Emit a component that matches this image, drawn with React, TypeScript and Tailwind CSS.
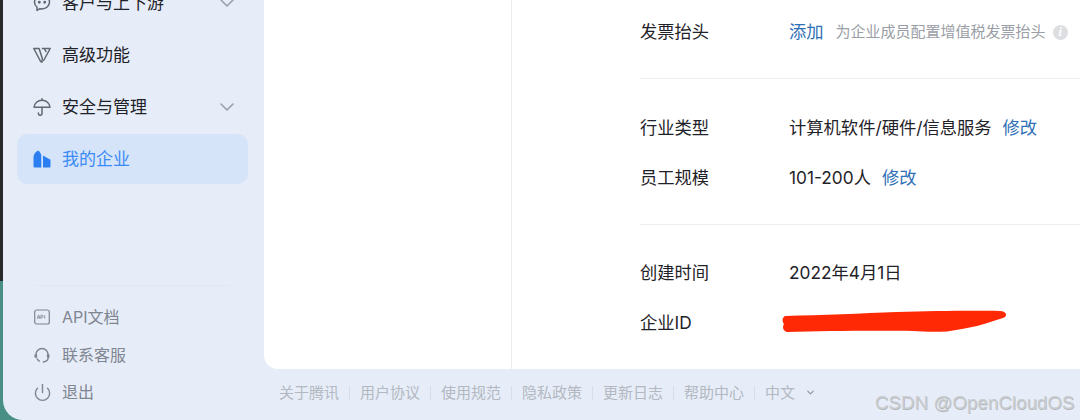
import React from "react";
import { ChevronDown, Power } from "lucide-react";

const font = 'font-["Inter","Noto_Sans_CJK_SC",sans-serif]';

function Chevron() {
  return (
    <svg width="16" height="10" viewBox="0 0 16 10" fill="none" stroke="#9aa0ab" strokeWidth="1.6" strokeLinecap="round" strokeLinejoin="round">
      <path d="M2 2l6 6 6-6" />
    </svg>
  );
}

function NavRow({ icon, label, chevron, active }: { icon: React.ReactNode; label: string; chevron?: boolean; active?: boolean }) {
  return (
    <div className={`h-[50px] shrink-0 rounded-[10px] flex items-center pl-[16px] pr-[13px] ${active ? "bg-[#d5e4f9] text-[#3b8bf5]" : "text-[#1f2329]"}`}>
      <span className="w-[18px] h-[18px] flex items-center justify-center shrink-0">{icon}</span>
      <span className="ml-[11px] text-[17px] leading-[24px] flex-1">{label}</span>
      {chevron && <Chevron />}
    </div>
  );
}

function BottomRow({ icon, label }: { icon: React.ReactNode; label: string }) {
  return (
    <div className="h-[37.5px] flex items-center pl-[17px] text-[#7f8591]">
      <span className="w-[16px] h-[16px] flex items-center justify-center shrink-0">{icon}</span>
      <span className="ml-[12px] text-[16px] leading-[24px]">{label}</span>
    </div>
  );
}

function InfoRow({ label, children, h = "h-[50px]" }: { label: string; children?: React.ReactNode; h?: string }) {
  return (
    <div className={`${h} flex items-center text-[17.3px] text-[#1f2329]`}>
      <span className="w-[149px] shrink-0">{label}</span>
      {children}
    </div>
  );
}

const FOOT = ["关于腾讯", "用户协议", "使用规范", "隐私政策", "更新日志", "帮助中心"];

export default function App() {
  return (
    <div className={`relative w-[1080px] h-[420px] overflow-hidden flex bg-[#e6edf8] ${font}`}>
      <div className="w-[264px] shrink-0 pl-[3px] flex bg-[linear-gradient(to_bottom,#26292b_0px,#26292b_281px,#4a8f86_281px,#4a8f86_100%)]">
        <aside className="w-[261px] bg-[#e6edf8] rounded-bl-[20px] flex flex-col pl-[14px] pr-[16px]">
          <div className="flex flex-col gap-[2px] -mt-[22px]">
            <NavRow
              label="客户与上下游"
              chevron
              icon={
                <svg width="18" height="18" viewBox="0 0 18 18" fill="none" stroke="#63676f" strokeWidth="1.5">
                  <path d="M9 1.500c4.300 0 7.500 2.900 7.500 6.600 0 3.900-3.400 6.800-7.800 6.800-.6 0-1.100 0-1.700-.2L4 16.400v-3.200C2.300 12 1.500 10.200 1.500 8.100 1.500 4.400 4.700 1.500 9 1.500z" strokeLinejoin="round" />
                  <circle cx="6.300" cy="8.200" r=".7" fill="#63676f" />
                  <circle cx="11.700" cy="8.200" r=".7" fill="#63676f" />
                </svg>
              }
            />
            <NavRow
              label="高级功能"
              icon={
                <svg width="18" height="18" viewBox="0 0 18 18" fill="none" stroke="#63676f" strokeWidth="1.5" strokeLinejoin="round">
                  <path d="M.8 2.500h5.300L9.300 12.500 9 16.200 7.600 15.500z" />
                  <path d="M8.800 2.500h8.400L10.400 15" />
                  <path d="M11.500 2.800l1.700 3.200" />
                </svg>
              }
            />
            <NavRow
              label="安全与管理"
              chevron
              icon={
                <svg width="18" height="18" viewBox="0 0 18 18" fill="none" stroke="#63676f" strokeWidth="1.5" strokeLinecap="round" strokeLinejoin="round">
                  <path d="M9 .8v1.400" />
                  <path d="M1 9.300C1.400 5.200 4.700 2.200 9 2.200s7.600 3 8 7.100z" />
                  <path d="M9 9.300v6.200a1.800 1.800 0 0 1-3.600 0v-.6" />
                </svg>
              }
            />
            <NavRow
              active
              label="我的企业"
              icon={
                <svg width="18" height="18" viewBox="0 0 18 18" fill="#2b7ff0">
                  <path d="M.5 7.200C.5 4.500 2.500 1.800 5 .5c2 1.300 3.300 3.300 3.300 5.300V17.500H1.500a1 1 0 0 1-1-1z" />
                  <path d="M10 5.500l6.600 3.800a1 1 0 0 1 .9 1v6.200a1 1 0 0 1-1 1H10z" />
                </svg>
              }
            />
          </div>

          <div className="mt-auto">
            <div className="h-px bg-[#e1e8f3] mx-[18px] mb-[13px]" />
            <div className="flex flex-col pb-[9px]">
              <BottomRow
                label="API文档"
                icon={
                  <svg width="16" height="16" viewBox="0 0 16 16" fill="none">
                    <rect x=".7" y="1" width="14.600" height="14" rx="2" stroke="#7f8591" strokeWidth="1.200" />
                    <path d="M3.300 9.800l1-3.600h.6l1 3.600M3.700 8.700h1.800M6.900 9.800V6.200h1.100a1.100 1.100 0 0 1 0 2.200H6.900M10.700 6.200v3.600" stroke="#7f8591" strokeWidth=".8" />
                  </svg>
                }
              />
              <BottomRow
                label="联系客服"
                icon={
                  <svg width="16" height="16" viewBox="0 0 16 16" fill="none" stroke="#7f8591" strokeWidth="1.400" strokeLinecap="round">
                    <path d="M2 7.500a6 6 0 0 1 12 0" />
                    <path d="M14.300 10c0 2.700-1.800 4.600-5 5" />
                    <path d="M3.200 11.800c.6 1 1.300 1.700 2.200 2.300" />
                    <rect x=".5" y="7" width="2.600" height="4" rx="1.200" fill="#7f8591" stroke="none" />
                    <rect x="12.900" y="7" width="2.600" height="4" rx="1.200" fill="#7f8591" stroke="none" />
                  </svg>
                }
              />
              <BottomRow label="退出" icon={<Power size={19} strokeWidth={1.8} color="#7f8591" className="shrink-0" />} />
            </div>
          </div>
        </aside>
      </div>

      <main className="flex-1 min-w-0 flex flex-col">
        <div className="h-[369px] shrink-0 bg-white rounded-bl-[14px] flex overflow-hidden">
          <div className="w-[248px] shrink-0 border-r border-[#ebedf0]" />
          <div className="flex-1 pl-[128px] flex flex-col">
            <InfoRow label="发票抬头" h="h-[64px]">
              <span className="text-[#2f6fb5]">添加</span>
              <span className="ml-[12px] text-[15px] text-[#9a9ea6]">为企业成员配置增值税发票抬头</span>
              <span className="ml-[7px] w-[15px] h-[15px] rounded-full bg-[#dcdee1] text-white text-[12px] leading-[15px] font-bold text-center font-['Liberation_Serif',serif] italic">i</span>
            </InfoRow>
            <div className="mt-[14px] h-px bg-[#eeeff1]" />
            <div className="pt-[24px]">
              <InfoRow label="行业类型">
                <span>计算机软件/硬件/信息服务</span>
                <span className="ml-[11px] text-[#2f6fb5]">修改</span>
              </InfoRow>
              <InfoRow label="员工规模">
                <span>101-200人</span>
                <span className="ml-[11px] text-[#2f6fb5]">修改</span>
              </InfoRow>
            </div>
            <div className="mt-[21px] h-px bg-[#eeeff1]" />
            <div className="pt-[23px]">
              <InfoRow label="创建时间">
                <span>2022年4月1日</span>
              </InfoRow>
              <InfoRow label="企业ID" />
            </div>
          </div>
        </div>

        <footer className="flex-1 flex items-start pt-[13px] pl-[15px] text-[15px] leading-[22px] text-[#b3b8c1]">
          {FOOT.map((t) => (
            <React.Fragment key={t}>
              <span>{t}</span>
              <span className="mx-[10px] mt-[4px] w-px h-[14px] bg-[#d8dde6]" />
            </React.Fragment>
          ))}
          <span>中文</span>
          <ChevronDown size={11} strokeWidth={2.500} className="ml-[10px] mt-[5px] text-[#8e939c]" />
        </footer>
      </main>

      <svg className="absolute left-[782px] top-[308px]" width="226" height="26" viewBox="0 0 226 26">
        <path
          d="M3 8C40 7 80 5.500 115 4C150 3 190 2.500 218 3C225 3.500 226 8 221 10C212 13 205 15 195 18C185 20 175 22 165 23.500C150 24 140 23.500 131 23C90 22.500 40 23 5 24C1 23 0 19 2 16C0 13 0 10 3 8Z"
          fill="#ff2a05"
        />
      </svg>

      <span className="absolute left-[875px] top-[390px] whitespace-nowrap text-[18.8px] leading-[26px] text-[#c9cbce] font-['Liberation_Sans',sans-serif] [text-shadow:0.5px_0.5px_0.5px_#b5b8bc]">
        CSDN @OpenCloudOS
      </span>
    </div>
  );
}
